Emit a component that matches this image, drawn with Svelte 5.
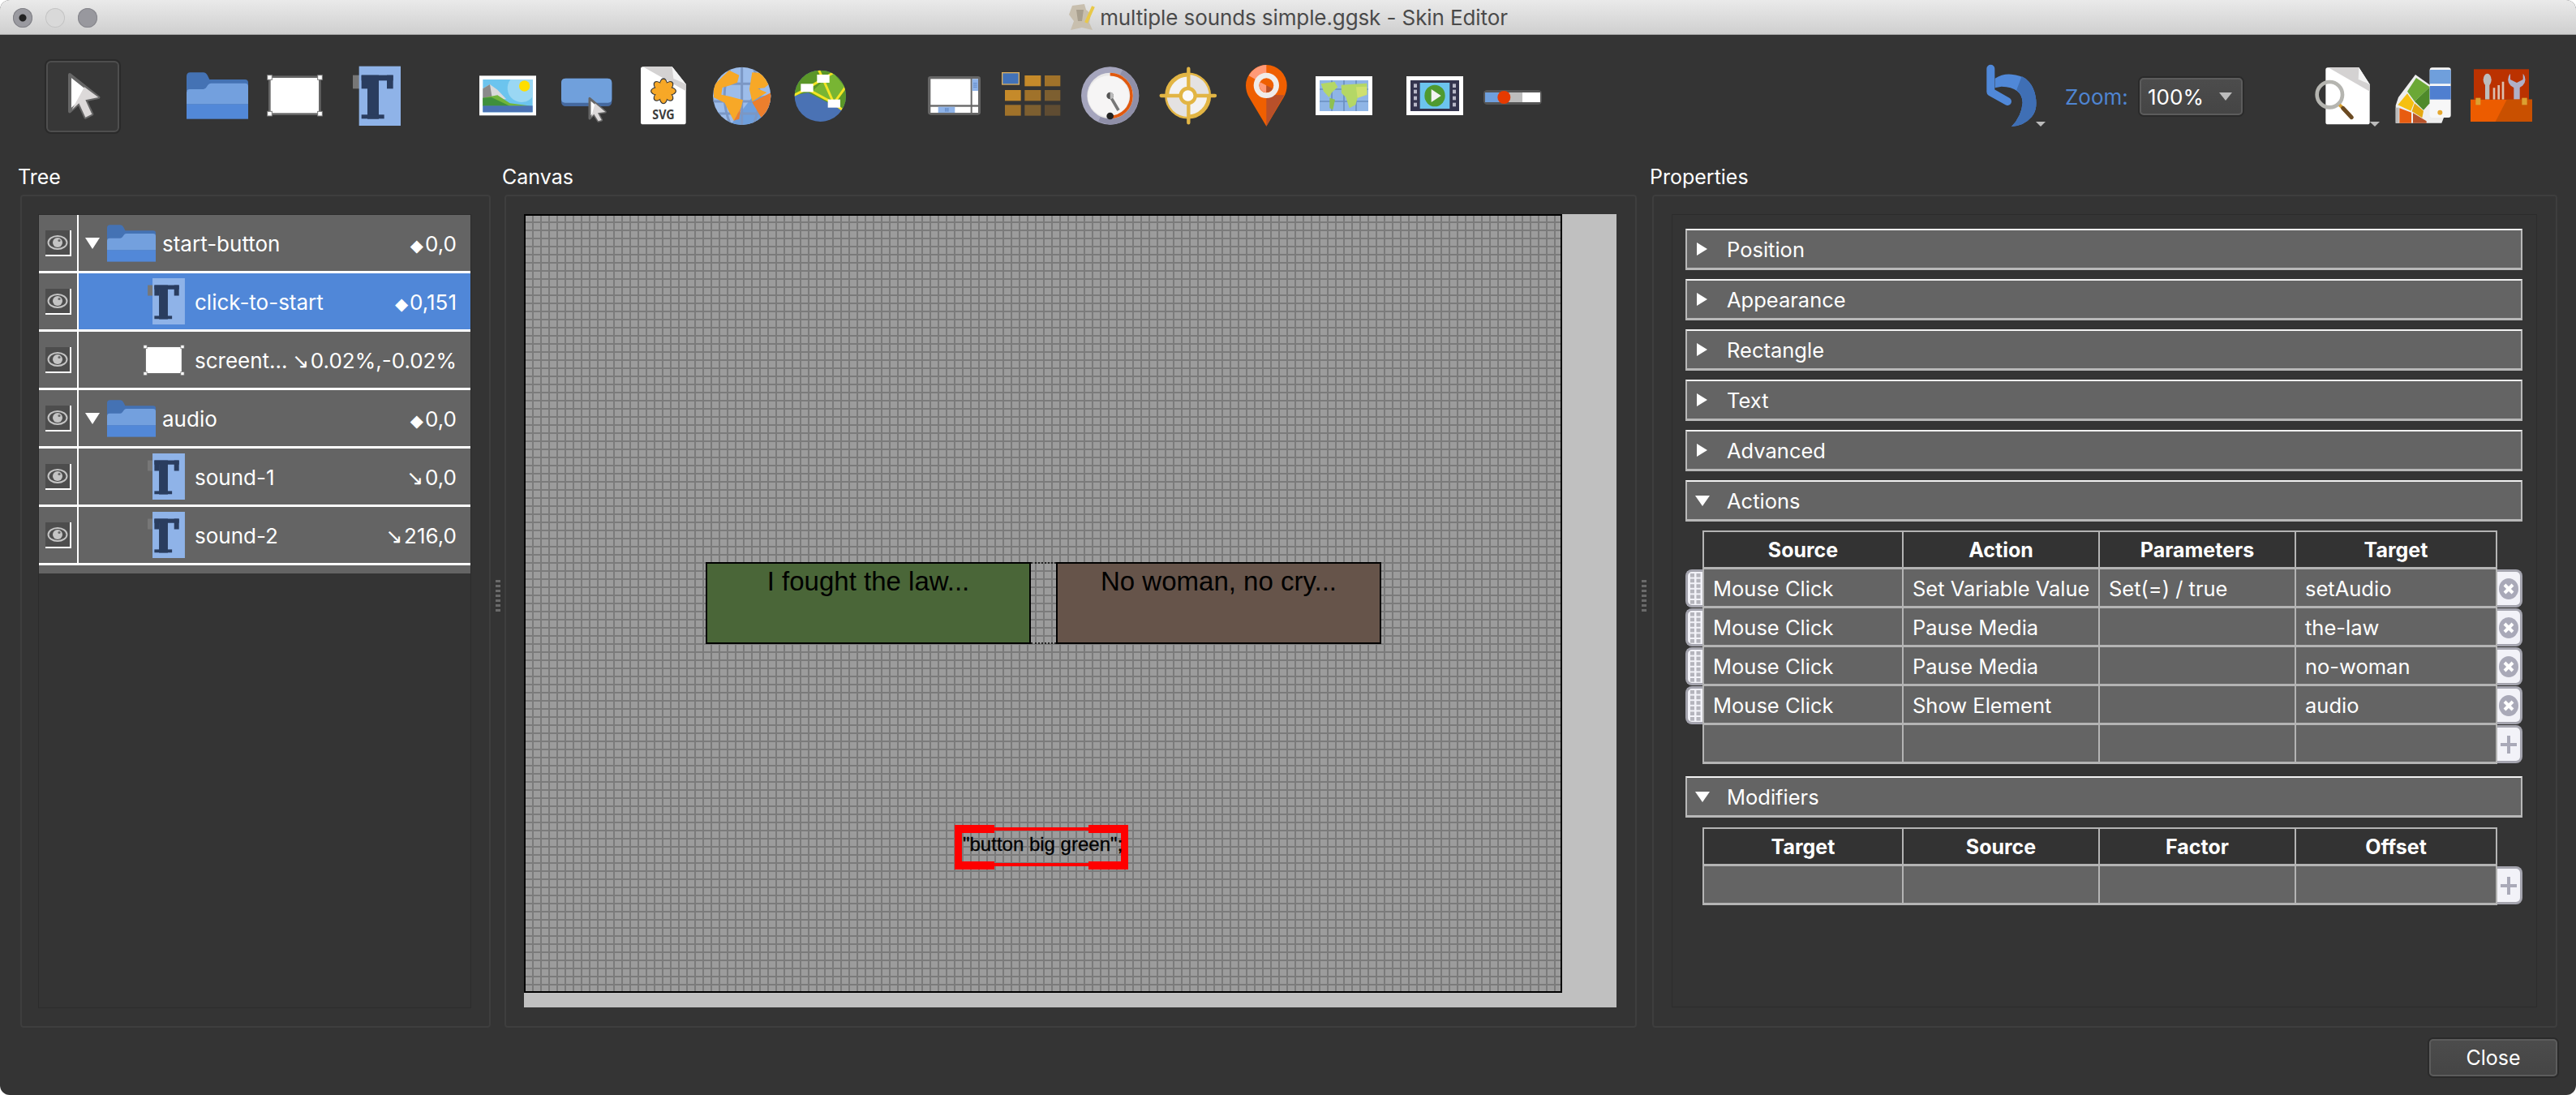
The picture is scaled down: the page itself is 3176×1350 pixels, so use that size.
<script>
  const tree = [
    { name: 'start-button', value: '0,0', mark: '◆', kind: 'folder', open: true },
    { name: 'click-to-start', value: '0,151', mark: '◆', kind: 'text', selected: true },
    { name: 'screent...', value: '0.02%,-0.02%', mark: '↘', kind: 'rect' },
    { name: 'audio', value: '0,0', mark: '◆', kind: 'folder', open: true },
    { name: 'sound-1', value: '0,0', mark: '↘', kind: 'text' },
    { name: 'sound-2', value: '216,0', mark: '↘', kind: 'text' }
  ];

  const closed = ['Position', 'Appearance', 'Rectangle', 'Text', 'Advanced'];

  const actions = [
    ['Mouse Click', 'Set Variable Value', 'Set(=) / true', 'setAudio'],
    ['Mouse Click', 'Pause Media', '', 'the-law'],
    ['Mouse Click', 'Pause Media', '', 'no-woman'],
    ['Mouse Click', 'Show Element', '', 'audio']
  ];

  const petals = [0, 45, 90, 135, 180, 225, 270, 315];
  const dots = [0, 1, 2, 3, 4, 5];

  const leftTools = [
    { icon: folder, gap: 83 },
    { icon: rectIcon, gap: 23 },
    { icon: textIcon, gap: 37 },
    { icon: imageIcon, gap: 97 },
    { icon: buttonIcon, gap: 30 },
    { icon: svgIcon, gap: 35 },
    { icon: globeIcon, gap: 33 },
    { icon: netIcon, gap: 28 },
    { icon: windowIcon, gap: 101 },
    { icon: gridIcon, gap: 26 },
    { icon: gaugeIcon, gap: 25 },
    { icon: crossIcon, gap: 24 },
    { icon: pinIcon, gap: 35 },
    { icon: mapIcon, gap: 35 },
    { icon: videoIcon, gap: 42 },
    { icon: sliderIcon, gap: 25 }
  ];
</script>

{#snippet arrow()}
  <svg width="44" height="88" viewBox="120 15 132 264">
    <path d="M138 66 L244 150 L196 160 L220 212 L196 224 L172 172 L138 202 Z" fill="#fff" stroke="#666" stroke-width="12" stroke-linejoin="round"/>
    <path d="M192 112 L244 150 L196 160 L220 212 L196 224 L172 172 L146 196 Z" fill="#dcd9d9"/>
  </svg>
{/snippet}

{#snippet folder(w = 76, h = 88, vb = '570 15 228 264')}
  <svg width={w} height={h} viewBox={vb}>
    <path d="M570 72 q0-14 14-14 h48 q10 0 16 12 l7 14 h131 q12 0 12 12 v30 H570z" fill="#4472b4"/>
    <path d="M570 132 q0-12 12-12 h50 q8 0 12-8 l4-6 q4-8 12-8 h126 q12 0 12 12 v66 H570z" fill="#73a0de"/>
    <rect x="570" y="175" width="228" height="55" fill="#5288d8"/>
  </svg>
{/snippet}

{#snippet rectIcon(w = 69, h = 88, vb = '868 15 207 264')}
  <svg width={w} height={h} viewBox={vb}>
    <rect x="878" y="74" width="186" height="138" fill="#fff" stroke="#666" stroke-width="8"/>
    {#each [[870, 68], [1056, 68], [870, 202], [1056, 202]] as [x, y]}
      <rect x={x} y={y} width="17" height="17" fill="#fff" stroke="#777" stroke-width="3"/>
    {/each}
  </svg>
{/snippet}

{#snippet textIcon(w = 59, h = 88, vb = '1186 15 177 264')}
  <svg width={w} height={h} viewBox={vb}>
    <rect x="1186" y="68" width="40" height="50" fill="#777"/>
    <rect x="1209" y="35" width="154" height="220" fill="#8fb3e8"/>
    <rect x="1218" y="68" width="117" height="20" fill="#2a3d5f"/>
    <rect x="1218" y="68" width="22" height="50" fill="#2a3d5f"/>
    <rect x="1312" y="68" width="23" height="50" fill="#2a3d5f"/>
    <rect x="1240" y="68" width="42" height="162" fill="#2a3d5f"/>
    <rect x="1218" y="214" width="84" height="15" fill="#2a3d5f"/>
  </svg>
{/snippet}

{#snippet imageIcon()}
  <svg width="71" height="88" viewBox="33 15 213 264">
    <rect x="33" y="70" width="210" height="147" fill="#fff"/>
    <rect x="46" y="84" width="184" height="121" fill="#6cc4ee"/>
    <path d="M148 84 h82 v64 a50 50 0 0 1 -82 -64z" fill="#9ad7f3"/>
    <circle cx="200" cy="108" r="20" fill="#ffde00"/>
    <path d="M46 118 L72 102 L100 122 L132 156 L46 170z" fill="#d9d9d9"/>
    <path d="M46 118 L72 102 L80 150 L46 170z" fill="#8a8a8a"/>
    <path d="M46 152 L100 142 L146 172 L226 182 L46 182z" fill="#71b43a"/>
    <path d="M46 152 L78 150 L146 182 L46 182z" fill="#3f8f3c"/>
    <rect x="46" y="181" width="184" height="24" fill="#4a72b4"/>
  </svg>
{/snippet}

{#snippet buttonIcon()}
  <svg width="63" height="88" viewBox="333 15 189 264">
    <rect x="333" y="80" width="187" height="103" rx="16" fill="#45699f"/>
    <path d="M333 96 q0-16 16-16 h155 q16 0 16 16 v60 q0 14 -14 14 h-159 q-14 0 -14 -14z" fill="#70a0dc"/>
    <path d="M438 154 L496 204 L468 208 L482 234 L470 238 L454 212 L438 228 Z" fill="#fff" stroke="#666" stroke-width="9" stroke-linejoin="round"/>
    <path d="M458 172 L496 204 L468 208 L482 234 L470 238 L454 212 L444 222z" fill="#dcd9d9"/>
  </svg>
{/snippet}

{#snippet svgIcon()}
  <svg width="56" height="88" viewBox="628 15 168 264">
    <path d="M628 45 q0-8 8-8 h108 l51 64 v141 q0 8 -8 8 H636 q-8 0 -8 -8z" fill="#fff"/>
    <path d="M636 37 h108 l51 64 v26z" fill="#d4d2d2"/>
    <path d="M744 37 l51 64 q-30 -14 -46 -20z" fill="#f4f4f4"/>
    {#each petals as a}
      <ellipse cx="712" cy="102" rx="13" ry="21" fill="#f7a827" stroke="#3a3a3a" stroke-width="4" transform="rotate({a} 712 127)"/>
    {/each}
    {#each petals as a}
      <ellipse cx="712" cy="103" rx="12" ry="19" fill="#f7a827" transform="rotate({a} 712 127)"/>
    {/each}
    <circle cx="712" cy="127" r="14" fill="#f7a827"/>
    <text x="671" y="232" class="svgtext" textLength="82" lengthAdjust="spacingAndGlyphs">SVG</text>
  </svg>
{/snippet}

{#snippet globeIcon()}
  <svg width="72" height="88" viewBox="895 15 216 264">
    <defs><clipPath id="gl"><circle cx="1002" cy="145" r="107"/></clipPath></defs>
    <g clip-path="url(#gl)">
      <rect x="895" y="38" width="216" height="214" fill="#9dbdea"/>
      <path d="M960 252 L1040 150 L1111 140 V252z" fill="#6f9fdc"/>
      <path d="M895 100 H1111 M895 165 H1111 M895 210 H1111 M960 38 Q915 145 960 252 M1002 38 V252 M1044 38 Q1089 145 1044 252" stroke="#7b97c4" stroke-width="9" fill="none"/>
      <path d="M898 105 L955 50 L992 68 L985 95 L958 106 L930 114 L926 140 L955 146 L1006 160 L1000 186 L972 236 L952 198 L938 170 L898 150z" fill="#f7a827"/>
      <path d="M1040 58 L1078 60 L1104 100 L1086 115 L1060 118 L1094 132 L1040 166 L1030 120z" fill="#f7a827"/>
      <path d="M1040 168 L1111 132 V190 L1074 226z" fill="#ec7f2d"/>
      <path d="M972 236 L998 190 L992 230z" fill="#ec7f2d"/>
    </g>
  </svg>
{/snippet}

{#snippet netIcon()}
  <svg width="64" height="88" viewBox="1193 15 192 264">
    <defs><clipPath id="nt"><circle cx="1290" cy="145" r="95"/></clipPath></defs>
    <g clip-path="url(#nt)">
      <rect x="1193" y="50" width="192" height="190" fill="#4a72b4"/>
      <path d="M1193 140 L1240 115 L1300 80 L1385 100 V195 L1340 180 L1260 130 L1193 142z" fill="#5a9628"/>
      <path d="M1193 50 H1385 V120 L1340 180 L1290 155 L1240 130 L1193 145z" fill="#5a9628"/>
      <path d="M1262 126 L1300 90 L1340 62 L1380 110 L1340 170z" fill="#78b533"/>
      <path d="M1193 142 L1240 118 L1300 82 L1340 58 M1285 50 L1300 82 L1340 172 L1385 110 M1240 118 L1340 172 L1370 195" stroke="#f3e424" stroke-width="9" fill="none"/>
    </g>
    <rect x="1218" y="100" width="46" height="30" fill="#fff"/>
    <rect x="1278" y="66" width="46" height="30" fill="#fff"/>
    <rect x="1318" y="158" width="46" height="30" fill="#fff"/>
  </svg>
{/snippet}

{#snippet windowIcon()}
  <svg width="65" height="88" viewBox="40 15 195 264">
    <rect x="40" y="72" width="195" height="143" rx="10" fill="#666"/>
    <rect x="50" y="82" width="148" height="96" fill="#fff"/>
    <rect x="204" y="82" width="22" height="96" fill="#fff"/>
    <rect x="204" y="82" width="22" height="44" fill="#8fb3e8"/>
    <path d="M208 98 h14 M208 105 h14 M208 112 h14" stroke="#4a72b4" stroke-width="2"/>
    <rect x="50" y="185" width="148" height="22" fill="#fff"/>
    <rect x="78" y="185" width="62" height="22" fill="#8fb3e8"/>
    <path d="M105 189 v14 M110 189 v14 M115 189 v14" stroke="#4a72b4" stroke-width="2"/>
    <rect x="204" y="185" width="22" height="22" fill="#fff"/>
  </svg>
{/snippet}

{#snippet gridIcon()}
  <svg width="73" height="88" viewBox="312 15 219 264">
    <rect x="314" y="59" width="62" height="43" fill="#4272b8" stroke="#dcb060" stroke-width="4"/>
    <rect x="397" y="69" width="60" height="40" fill="#c58a2a"/>
    <rect x="471" y="69" width="58" height="40" fill="#a0722a"/>
    <rect x="324" y="123" width="59" height="40" fill="#c58a2a"/>
    <rect x="397" y="123" width="60" height="40" fill="#a0722a"/>
    <rect x="471" y="123" width="58" height="40" fill="#7d5f30"/>
    <rect x="324" y="178" width="59" height="40" fill="#a0722a"/>
    <rect x="397" y="178" width="60" height="40" fill="#7d5f30"/>
    <rect x="471" y="178" width="58" height="40" fill="#5f4c32"/>
  </svg>
{/snippet}

{#snippet gaugeIcon()}
  <svg width="72" height="88" viewBox="607 15 216 264">
    <circle cx="714" cy="144" r="107" fill="#a5a5bd"/>
    <path d="M760 48 A107 107 0 0 1 714 251 L670 240 L714 144z" fill="#8f8fa8"/>
    <circle cx="714" cy="144" r="85" fill="#e9e8e8"/>
    <circle cx="708" cy="146" r="76" fill="#f6f5f5"/>
    <path d="M714 65 A79 79 0 0 1 714 223" fill="none" stroke="#e0590f" stroke-width="11"/>
    <path d="M714 145 L745 198" stroke="#777" stroke-width="11"/>
    <circle cx="714" cy="144" r="13" fill="#555"/>
    <path d="M714 131 a13 13 0 0 1 0 26z" fill="#bbb"/>
    <circle cx="714" cy="219" r="13" fill="#222"/>
  </svg>
{/snippet}

{#snippet crossIcon()}
  <svg width="72" height="88" viewBox="895 15 216 264">
    <circle cx="1002" cy="144" r="78" fill="#f3f2f2" stroke="#e2b544" stroke-width="15"/>
    <path d="M1002 66 A78 78 0 0 1 1080 144 L1002 144z" fill="#e4e2e2"/>
    <path d="M1002 144 L1002 222 A78 78 0 0 1 924 144z" fill="#e4e2e2"/>
    <path d="M903 144 H1102 M1004 44 V244" stroke="#e2b544" stroke-width="13" stroke-linecap="round"/>
    <circle cx="1002" cy="144" r="27" fill="#fbfafa" stroke="#e2b544" stroke-width="13"/>
  </svg>
{/snippet}

{#snippet pinIcon()}
  <svg width="51" height="88" viewBox="1214 15 153 264">
    <path d="M1290 30 A76 76 0 0 1 1366 106 Q1366 130 1354 150 L1290 257 L1226 150 Q1214 130 1214 106 A76 76 0 0 1 1290 30z" fill="#ef5f00"/>
    <path d="M1290 140 L1356 142 L1290 257z" fill="#b8502a"/>
    <path d="M1290 30 V106 L1225 70 A76 76 0 0 1 1290 30z" fill="#ff9a78"/>
    <circle cx="1290" cy="106" r="37" fill="#ef5f00" stroke="#efecea" stroke-width="20"/>
    <path d="M1290 106 V80 A26 26 0 0 1 1313 118z" fill="#ff9a78" transform="rotate(180 1290 106)"/>
    <path d="M1290 106 L1313 118 A26 26 0 0 1 1290 132z" fill="#b8502a"/>
  </svg>
{/snippet}

{#snippet mapIcon()}
  <svg width="70" height="88" viewBox="0 15 210 264">
    <rect x="0" y="72" width="210" height="144" fill="#fff"/>
    <rect x="15" y="87" width="180" height="114" fill="#8fb5e6"/>
    <path d="M15 120 H195 M15 165 H195 M60 87 V201 M105 87 V201 M150 87 V201" stroke="#6b8fc0" stroke-width="5"/>
    <path d="M20 100 L70 92 L82 112 L60 132 L50 150 L30 128z" fill="#b4d766"/>
    <path d="M52 152 L72 158 L64 196 L52 190z" fill="#8fc050"/>
    <path d="M95 104 L190 98 L190 140 L155 152 L148 178 L125 190 L112 150 L96 134z" fill="#b4d766"/>
    <path d="M150 112 L190 110 L190 140 L155 152z" fill="#cfe06f"/>
  </svg>
{/snippet}

{#snippet videoIcon()}
  <svg width="70" height="88" viewBox="0 15 210 264">
    <rect x="0" y="72" width="210" height="144" fill="#fff"/>
    <rect x="15" y="87" width="180" height="114" fill="#34344e"/>
    <rect x="50" y="96" width="110" height="96" fill="#6cc4ee"/>
    {#each [100, 122, 146, 170] as y}
      <rect x="27" y={y} width="12" height="14" fill="#b8b8c8"/>
      <rect x="171" y={y} width="12" height="14" fill="#b8b8c8"/>
    {/each}
    <ellipse cx="105" cy="144" rx="38" ry="40" fill="#4f9a30"/>
    <path d="M92 120 L128 144 L92 168z" fill="#f2f2f2"/>
  </svg>
{/snippet}

{#snippet sliderIcon()}
  <svg width="72" height="88" viewBox="0 15 216 264">
    <rect x="0" y="123" width="216" height="54" rx="14" fill="#555"/>
    <rect x="6" y="132" width="84" height="36" fill="#6f9fdc"/>
    <rect x="90" y="132" width="54" height="36" fill="#bdbdbd"/>
    <rect x="144" y="132" width="66" height="36" fill="#fff"/>
    <ellipse cx="76" cy="150" rx="24" ry="24" fill="#e63a00"/>
  </svg>
{/snippet}

{#snippet undoIcon()}
  <svg width="73" height="88" viewBox="0 15 219 264">
    <path d="M32 80 Q60 62 93 65 Q160 70 178 130 Q195 190 168 222 Q140 255 93 258 Q130 220 134 170 Q132 112 56 110 L32 115z" fill="#5088d8"/>
    <path d="M131 72 Q162 85 178 130 Q195 190 168 222 Q140 255 93 258 Q130 220 134 170 Q134 140 112 122z" fill="#3f6fb5"/>
    <path d="M16 44 V130 L78 165" fill="none" stroke="#5088d8" stroke-width="30" stroke-linecap="round" stroke-linejoin="round"/>
    <path d="M183 240 h36 l-18 18z" fill="#bbb"/>
  </svg>
{/snippet}

{#snippet docIcon()}
  <svg width="80" height="88" viewBox="42 15 240 264">
    <path d="M82 48 q0-8 8-8 h115 l40 62 v140 q0 8 -8 8 H90 q-8 0 -8 -8z" fill="#fff"/>
    <path d="M92 40 h113 l40 62 v26z" fill="#d4d2d2"/>
    <path d="M205 40 l40 62 q-30 -14 -42 -18z" fill="#f4f4f4"/>
    <circle cx="97" cy="140" r="47" fill="none" stroke="#b5b5b0" stroke-width="14"/>
    <path d="M133 178 L146 190" stroke="#d8a030" stroke-width="12"/>
    <path d="M146 190 L178 224" stroke="#6b4a22" stroke-width="15" stroke-linecap="round"/>
    <path d="M245 240 h37 l-18 18z" fill="#bbb"/>
  </svg>
{/snippet}

{#snippet paletteIcon()}
  <svg width="70" height="88" viewBox="340 15 210 264">
    <path d="M342 180 L352 150 L415 66 L470 105 L520 225 L512 245 H342z" fill="#eee"/>
    <path d="M385 128 L418 78 L468 112 L412 165z" fill="#6ba836"/>
    <path d="M412 165 L468 112 L468 172 L445 197z" fill="#4e8a2a"/>
    <path d="M350 178 L385 136 L410 170 L398 200z" fill="#f5c010"/>
    <path d="M412 172 L445 200 L440 226 L402 202z" fill="#e5a810"/>
    <rect x="342" y="188" width="12" height="57" fill="#bbb"/>
    <path d="M356 190 L400 206 V245 H356z" fill="#e85c10"/>
    <path d="M406 208 L456 238 V245 H406z" fill="#b8532a"/>
    <rect x="468" y="40" width="78" height="185" rx="9" fill="#f7f7f7"/>
    <path d="M468 52 q0-4 4-4 h70 q4 0 4 4 v48 h-78z" fill="#6f9fdc"/>
    <rect x="468" y="108" width="78" height="50" fill="#4f7fd0"/>
    <circle cx="506" cy="206" r="9" fill="#e5a830"/>
  </svg>
{/snippet}

{#snippet toolboxIcon()}
  <svg width="76" height="88" viewBox="618 15 228 264">
    <rect x="630" y="46" width="204" height="112" fill="#bb3200"/>
    <ellipse cx="680" cy="85" rx="15" ry="23" fill="#bdbdbd"/>
    <rect x="672" y="100" width="16" height="58" fill="#bdbdbd"/>
    <path d="M705 158 V115 M722 158 V105 M738 158 V92" stroke="#dcc0b0" stroke-width="8"/>
    <path d="M765 62 A32 32 0 1 0 812 62 V84 L789 96 L765 84z" fill="#b0b0c8"/>
    <rect x="778" y="110" width="22" height="48" fill="#b0b0c8"/>
    <rect x="618" y="158" width="228" height="82" fill="#ec5c00"/>
    <path d="M752 158 H846 V240 H710z" fill="#c95000"/>
    <rect x="637" y="152" width="18" height="26" fill="#dca030"/>
    <rect x="808" y="152" width="19" height="26" fill="#dca030"/>
  </svg>
{/snippet}

{#snippet eye()}
  <span class="eyebox">
    <svg width="26" height="18" viewBox="0 0 26 18">
      <ellipse cx="13" cy="9" rx="11.5" ry="8" fill="none" stroke="#c4c4c4" stroke-width="2"/>
      <circle cx="13" cy="9" r="6" fill="#c4c4c4"/>
      <circle cx="15" cy="6.5" r="1.6" fill="#666"/>
    </svg>
  </span>
{/snippet}

{#snippet grip()}
  <span class="side grip">
    <svg width="15" height="38" viewBox="0 0 15 38">
      {#each dots as d}
        <rect x="1" y={d * 6.6} width="5" height="4.6" fill="#b4b4bc"/>
        <rect x="8.5" y={d * 6.6} width="5" height="4.6" fill="#b4b4bc"/>
      {/each}
    </svg>
  </span>
{/snippet}

{#snippet removeBtn()}
  <span class="side end">
    <svg width="26" height="28" viewBox="0 0 26 28">
      <ellipse cx="13" cy="14" rx="12" ry="13" fill="#a9a9b8"/>
      <path d="M8 9 L18 19 M18 9 L8 19" stroke="#fff" stroke-width="4"/>
    </svg>
  </span>
{/snippet}

{#snippet addBtn()}
  <span class="side end">
    <svg width="22" height="24" viewBox="0 0 22 24">
      <path d="M11 1 V23 M1 12 H21" stroke="#a9a9b8" stroke-width="4"/>
    </svg>
  </span>
{/snippet}

<div class="window">
  <header class="titlebar">
    <div class="lights">
      <span class="light first"></span>
      <span class="light"></span>
      <span class="light third"></span>
    </div>
    <svg class="doc" width="33" height="34" viewBox="0 0 33 34">
      <path d="M5 3 L20 1 L22 8 L28 13 L26 24 L30 33 L17 30 L3 33 L7 22 L1 14z" fill="#c8bfae"/>
      <path d="M22 24 L31 4" stroke="#e8c848" stroke-width="4"/>
      <path d="M10 8 L19 8 L17 22 L12 22z" fill="#a89f8e"/>
    </svg>
    <span class="title">multiple sounds simple.ggsk - Skin Editor</span>
  </header>

  <div class="toolbar">
    <span class="select">{@render arrow()}</span>
    {#each leftTools as t}
      <span class="tool" style="margin-left:{t.gap}px">{@render t.icon()}</span>
    {/each}
    <div class="right">
      <span class="tool">{@render undoIcon()}</span>
      <span class="zoomlabel">Zoom:</span>
      <span class="combo">100%<i class="caret"></i></span>
      <span class="tool doctool">{@render docIcon()}</span>
      <span class="tool pal">{@render paletteIcon()}</span>
      <span class="tool box">{@render toolboxIcon()}</span>
    </div>
  </div>

  <div class="panels">
    <section class="col treecol">
      <h2>Tree</h2>
      <div class="panel">
        <div class="treelist">
          {#each tree as row}
            <div class="row" class:selected={row.selected}>
              <div class="eyecell">{@render eye()}</div>
              <div class="rowmain" class:child={row.kind !== 'folder'}>
                {#if row.kind === 'folder'}
                  <i class="down"></i>
                  {@render folder(60, 46, '570 58 228 172')}
                {:else if row.kind === 'text'}
                  {@render textIcon(46, 57, '1186 35 177 220')}
                {:else}
                  <span class="recticon">{@render rectIcon(52, 38, '868 66 207 154')}</span>
                {/if}
                <span class="name">{row.name}</span>
                <span class="val"><b class:arrow={row.mark === '↘'}>{row.mark}</b>{row.value}</span>
              </div>
            </div>
          {/each}
        </div>
      </div>
      <div class="split"></div>
    </section>

    <section class="col canvascol">
      <h2>Canvas</h2>
      <div class="panel">
        <div class="view">
          <div class="stage">
            <div class="node green">I fought the law...</div>
            <div class="node brown">No woman, no cry...</div>
            <div class="dotted top"></div>
            <div class="dotted bottom"></div>
            <div class="sel">
              <i class="h tl"></i><i class="h tr"></i><i class="h bl"></i><i class="h br"></i>
              <span class="seltext">"button big green";</span>
            </div>
          </div>
        </div>
      </div>
      <div class="split"></div>
    </section>

    <section class="col propcol">
      <h2>Properties</h2>
      <div class="panel">
        <div class="props">
          {#each closed as c}
            <div class="bar"><i class="rtri"></i>{c}</div>
          {/each}
          <div class="bar"><i class="dtri"></i>Actions</div>
          <div class="table">
            <div class="trow head">
              <span></span>
              <span class="c">Source</span><span class="c">Action</span><span class="c">Parameters</span><span class="c">Target</span>
            </div>
            {#each actions as a}
              <div class="trow">
                {@render grip()}
                {#each a as cell}<span class="c">{cell}</span>{/each}
                {@render removeBtn()}
              </div>
            {/each}
            <div class="trow">
              <span></span>
              <span class="c"></span><span class="c"></span><span class="c"></span><span class="c"></span>
              {@render addBtn()}
            </div>
          </div>
          <div class="bar mods"><i class="dtri"></i>Modifiers</div>
          <div class="table">
            <div class="trow head">
              <span></span>
              <span class="c">Target</span><span class="c">Source</span><span class="c">Factor</span><span class="c">Offset</span>
            </div>
            <div class="trow">
              <span></span>
              <span class="c"></span><span class="c"></span><span class="c"></span><span class="c"></span>
              {@render addBtn()}
            </div>
          </div>
        </div>
      </div>
    </section>
  </div>

  <footer class="foot"><button class="close">Close</button></footer>
</div>

<style>
  :global(body) { margin: 0; background: #fff; }
  .window {
    width: 3176px; height: 1350px; background: #343434; color: #fff; overflow: hidden;
    border-radius: 12px; display: flex; flex-direction: column;
    font-family: Inter, "Liberation Sans", sans-serif; font-size: 26px;
  }
  .titlebar {
    height: 43px; box-sizing: border-box; flex: none; display: flex; align-items: center; justify-content: center; gap: 7px;
    background: linear-gradient(#eaeaea, #cfcfcf); border-bottom: 1px solid #a8a8a8; position: relative;
  }
  .lights { position: absolute; left: 16px; top: 10px; display: flex; gap: 16px; }
  .light { width: 24px; height: 24px; border-radius: 50%; background: #d9d9d9; box-shadow: inset 0 0 0 1px #c4c4c4; box-sizing: border-box; }
  .light.first { background: radial-gradient(circle, #222 0 4px, #9a9aa0 5px); box-shadow: inset 0 0 0 1px #808086; }
  .light.third { background: #98989e; box-shadow: inset 0 0 0 1px #86868c; }
  .title { color: #4a4a4a; font-size: 26px; letter-spacing: -0.1px; margin-left: -1px; }
  .doc { flex: none; }

  .toolbar { height: 152px; flex: none; display: flex; align-items: center; padding: 0 54px 0 57px; box-sizing: border-box; }
  .tool { display: block; height: 88px; flex: none; }
  .tool :global(svg) { display: block; }
  .select {
    width: 90px; height: 88px; box-sizing: border-box; display: flex; align-items: center; justify-content: center;
    background: #373737; border: 2px solid #4e4e4e; border-radius: 6px; box-shadow: 0 0 0 2px #2a2a2a; flex: none;
  }
  .select :global(svg) { display: block; }
  .right { margin-left: auto; display: flex; align-items: center; }
  .zoomlabel { color: #4f85d2; margin-left: 24px; width: 92px; }
  .combo {
    width: 127px; height: 46px; box-sizing: border-box; padding-left: 8px; display: flex; align-items: center; justify-content: space-between;
    background: linear-gradient(#4c4c4c, #454545); border: 2px solid #5c5c5c; border-radius: 5px; box-shadow: 0 0 0 2px #2a2a2a; padding-right: 11px;
  }
  .caret { width: 0; height: 0; border-left: 8px solid transparent; border-right: 8px solid transparent; border-top: 10px solid #bcbcbc; }
  .doctool { margin-left: 89px; }
  .pal { margin-left: 19px; }
  .box { margin-left: 23px; }

  .panels { display: flex; flex: none; height: 1072px; padding-left: 25px; }
  .col { display: flex; flex-direction: column; position: relative; }
  .treecol { width: 580px; margin-right: 17px; }
  .canvascol { width: 1396px; margin-right: 19px; }
  .propcol { width: 1116px; }
  h2 { margin: 0 0 0 -3px; height: 45px; line-height: 46px; font-size: 25px; font-weight: 400; }
  .panel {
    flex: 1; box-sizing: border-box; padding: 22px 23px 23px 22px; border: 2px solid #3e3e3e; border-radius: 4px; min-height: 0;
  }
  .treecol .panel { padding: 23px 23px 23px 21px; }
  .split { position: absolute; right: -12px; top: 520px; width: 6px; height: 40px; background: repeating-linear-gradient(#6a6a6a 0 3px, transparent 3px 6px); }

  .treelist { height: 100%; box-shadow: 0 0 0 1px #2c2c2c; }
  .treelist { background-image: linear-gradient(#646464, #646464); background-size: 100% 442px; background-repeat: no-repeat; }
  .row { height: 72px; display: flex; box-sizing: border-box; border-bottom: 3px solid #fff; }
  .eyecell { width: 47px; flex: none; border-right: 2px solid #fff; display: flex; align-items: center; justify-content: center; }
  .eyebox {
    width: 32px; height: 32px; box-sizing: border-box; background: #4d4d4d; border-right: 2px solid #fff; border-bottom: 2px solid #fff;
    display: flex; align-items: center; justify-content: center;
  }
  .rowmain { flex: 1; display: flex; align-items: center; padding-right: 17px; min-width: 0; font-size: 26px; }
  .row.selected .rowmain { background: #5087d8; }
  .rowmain.child { padding-left: 85px; }
  .rowmain :global(svg) { display: block; flex: none; }
  .recticon { margin-left: -6px; }
  .down { width: 0; height: 0; border-left: 9px solid transparent; border-right: 9px solid transparent; border-top: 14px solid #fff; margin: 0 9px 0 8px; }
  .name { margin-left: 8px; padding-top: 2px; }
  .child .name { margin-left: 12px; }
  .val { margin-left: auto; white-space: nowrap; padding-top: 2px; }
  .val b { font-family: "DejaVu Sans", sans-serif; font-weight: 400; font-size: 21px; margin-right: 2px; }
  .val b.arrow { font-size: 25px; line-height: 1; }

  .view { height: 100%; background: #c0c0c0; }
  .stage {
    width: 1280px; height: 960px; box-sizing: border-box; border: 2px solid #000; position: relative;
    background-color: #9c9c9c;
    background-image: linear-gradient(#7b7b7b 2px, transparent 2px), linear-gradient(90deg, #7b7b7b 2px, transparent 2px);
    background-size: 10px 10px; background-position: 8px 7px;
    font-family: "Liberation Sans", sans-serif; color: #000;
  }
  .node { position: absolute; top: 427px; width: 401px; height: 101px; box-sizing: border-box; border: 2px solid #000; text-align: center; font-size: 33px; line-height: 44px; }
  .green { left: 222px; background: #4a6638; }
  .brown { left: 654px; background: #66544a; }
  .dotted { position: absolute; left: 623px; width: 31px; border-top: 2px dotted #222; }
  .dotted.top { top: 427px; }
  .dotted.bottom { top: 526px; }
  .sel { position: absolute; left: 529px; top: 754px; width: 214px; height: 48px; box-sizing: border-box; border: solid #f00; border-width: 4px 9px; }
  .h { position: absolute; width: 49px; height: 10px; background: #f00; }
  .tl { left: -9px; top: -7px; }
  .tr { right: -9px; top: -7px; }
  .bl { left: -9px; bottom: -8px; }
  .br { right: -9px; bottom: -8px; }
  .seltext { position: absolute; left: 1px; top: 0; font-size: 24px; line-height: 34px; white-space: nowrap; -webkit-text-stroke: 0.3px #000; }

  .props { height: 100%; box-sizing: border-box; border: 1px solid #2c2c2c; padding: 17px 17px 0 16px; }
  .bar {
    height: 51px; box-sizing: border-box; margin-bottom: 11px; background: #646464; display: flex; align-items: center;
    border: 2px solid #b8b8b8; border-top-color: #f2f2f2; border-bottom-width: 3px; font-size: 25.5px;
  }
  .rtri { width: 0; height: 0; border-top: 8px solid transparent; border-bottom: 8px solid transparent; border-left: 13px solid #fff; margin: 0 24px 0 12px; }
  .dtri { width: 0; height: 0; border-left: 9px solid transparent; border-right: 9px solid transparent; border-top: 13px solid #fff; margin: 0 21px 0 10px; }
  .mods { margin-top: 15px; margin-bottom: 12px; }
  .trow { display: grid; grid-template-columns: 21px 248px 242px 242px 248px 31px; height: 48px; }
  .c {
    box-sizing: border-box; background: #646464; border-right: 2px solid #b4b4b4; border-bottom: 3px solid #b4b4b4;
    padding: 2px 0 0 11px; display: flex; align-items: center; white-space: nowrap; overflow: hidden; font-size: 25.5px;
  }
  .trow > .c:nth-child(2) { border-left: 2px solid #b4b4b4; }
  .head .c { background: #333; justify-content: center; font-weight: 700; font-size: 25px; padding: 0; border-top: 2px solid #b4b4b4; }
  .side {
    box-sizing: border-box; background: #f2f2f8; border: 3px solid #a4a4ae; display: flex; align-items: center; justify-content: center; height: 47px;
  }
  .grip { border-radius: 8px 0 0 8px; border-right: 0; }
  .end { border-radius: 0 8px 8px 0; border-left: 0; }

  .foot { flex: 1; display: flex; justify-content: flex-end; align-items: flex-start; padding: 14px 23px 0 0; }
  .close {
    width: 158px; height: 46px; box-sizing: border-box; background: linear-gradient(#4c4c4c, #454545); color: #fff;
    border: 2px solid #5c5c5c; border-radius: 5px; box-shadow: 0 0 0 2px #2a2a2a; font: inherit; font-size: 25px; padding: 0;
  }
  .svgtext { font-family: "Noto Sans", sans-serif; font-weight: 700; font-size: 50px; fill: #3c3c3c; }
</style>
